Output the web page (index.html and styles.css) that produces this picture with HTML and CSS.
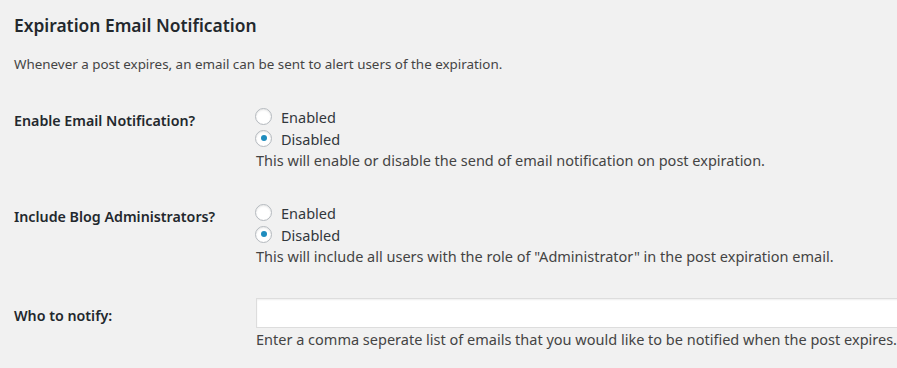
FILE: index.html
```html
<!DOCTYPE html>
<html lang="en">
<head>
<meta charset="utf-8">
<title>Expiration Email Notification</title>
<link rel="stylesheet" href="styles.css">
</head>
<body>
<div class="wrap">
  <h2 class="title">Expiration Email Notification</h2>
  <p class="intro">Whenever a post expires, an email can be sent to alert users of the expiration.</p>
  <div class="form">
    <div class="row">
      <div class="th">Enable Email Notification?</div>
      <div class="td">
        <label class="radio"><span class="rb"></span>Enabled</label>
        <label class="radio"><span class="rb checked"></span>Disabled</label>
        <p class="description">This will enable or disable the send of email notification on post expiration.</p>
      </div>
    </div>
    <div class="row">
      <div class="th">Include Blog Administrators?</div>
      <div class="td">
        <label class="radio"><span class="rb"></span>Enabled</label>
        <label class="radio"><span class="rb checked"></span>Disabled</label>
        <p class="description">This will include all users with the role of "Administrator" in the post expiration email.</p>
      </div>
    </div>
    <div class="row">
      <div class="th th-input">Who to notify:</div>
      <div class="td">
        <div class="text-input"></div>
        <p class="description">Enter a comma seperate list of emails that you would like to be notified when the post expires.</p>
      </div>
    </div>
  </div>
</div>
</body>
</html>
```

FILE: styles.css
```css
html, body {
  margin: 0;
  padding: 0;
  overflow: hidden;
  background: #f1f1f1;
}

body {
  font-family: "Noto Sans", "Open Sans", sans-serif;
  color: #444;
}

.wrap {
  padding-left: 14px;
}

.title {
  margin: 13px 0 0;
  font-size: 17.4px;
  line-height: 24px;
  font-weight: 600;
  color: #23282d;
}

.intro {
  margin: 16.6px 0 16.4px;
  font-size: 13.4px;
  line-height: 20px;
  color: #444;
}

.row {
  display: grid;
  grid-template-columns: 242px 1fr;
}

.th {
  padding-top: 21px;
  font-size: 14.25px;
  line-height: 20px;
  font-weight: 600;
  color: #23282d;
}

.th-input {
  padding-top: 24px;
}

.td {
  padding: 16px 0;
  font-size: 14.5px;
  line-height: 22px;
  color: #444;
  min-width: 0;
}

.radio {
  display: flex;
  align-items: center;
  height: 22px;
  color: #32373c;
}

.rb {
  box-sizing: border-box;
  width: 17px;
  height: 17px;
  margin: -1px 9px 0 -1px;
  border: 1px solid #b4b9be;
  border-radius: 50%;
  background: #fff;
  box-shadow: inset 0 1px 2px rgba(0, 0, 0, 0.1);
  display: flex;
  align-items: center;
  justify-content: center;
}

.rb.checked::after {
  content: "";
  width: 6px;
  height: 6px;
  border-radius: 50%;
  background: #1e8cbe;
}

.description {
  margin: 0;
  line-height: 20px;
  white-space: nowrap;
}

.text-input {
  box-sizing: border-box;
  width: 680px;
  height: 30px;
  margin-bottom: 1px;
  border: 1px solid #ddd;
  background: #fff;
  box-shadow: inset 0 1px 2px rgba(0, 0, 0, 0.07);
}
```
